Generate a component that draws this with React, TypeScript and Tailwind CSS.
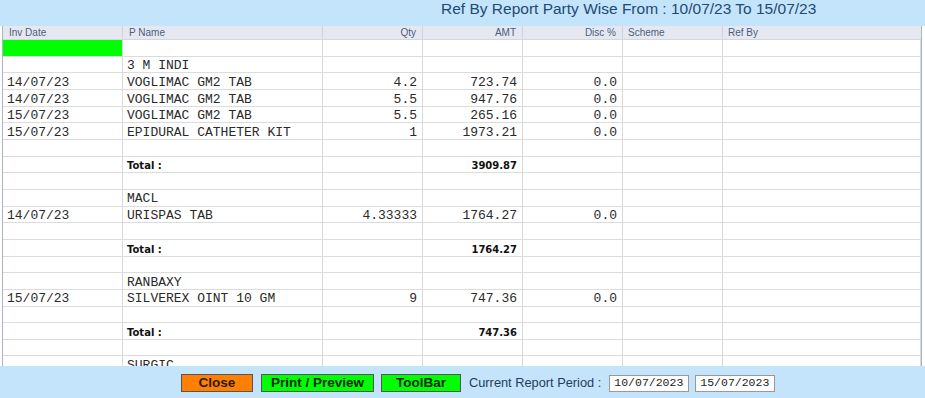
import React from 'react';

type Row =
  | { kind: 'blank' }
  | { kind: 'green' }
  | { kind: 'party'; name: string }
  | { kind: 'item'; date: string; name: string; qty: string; amt: string; disc: string }
  | { kind: 'total'; amt: string };

const rows: Row[] = [
  { kind: 'green' },
  { kind: 'party', name: '3 M INDI' },
  { kind: 'item', date: '14/07/23', name: 'VOGLIMAC GM2 TAB', qty: '4.2', amt: '723.74', disc: '0.0' },
  { kind: 'item', date: '14/07/23', name: 'VOGLIMAC GM2 TAB', qty: '5.5', amt: '947.76', disc: '0.0' },
  { kind: 'item', date: '15/07/23', name: 'VOGLIMAC GM2 TAB', qty: '5.5', amt: '265.16', disc: '0.0' },
  { kind: 'item', date: '15/07/23', name: 'EPIDURAL CATHETER KIT', qty: '1', amt: '1973.21', disc: '0.0' },
  { kind: 'blank' },
  { kind: 'total', amt: '3909.87' },
  { kind: 'blank' },
  { kind: 'party', name: 'MACL' },
  { kind: 'item', date: '14/07/23', name: 'URISPAS TAB', qty: '4.33333', amt: '1764.27', disc: '0.0' },
  { kind: 'blank' },
  { kind: 'total', amt: '1764.27' },
  { kind: 'blank' },
  { kind: 'party', name: 'RANBAXY' },
  { kind: 'item', date: '15/07/23', name: 'SILVEREX OINT 10 GM', qty: '9', amt: '747.36', disc: '0.0' },
  { kind: 'blank' },
  { kind: 'total', amt: '747.36' },
  { kind: 'blank' },
  { kind: 'party', name: 'SURGIC' },
];

// Courier-like grid text
const mono = "font-['Liberation_Mono','Courier_New',monospace] text-[13px] text-[#2a2a2a]";
const bold = "font-['DejaVu_Sans',Verdana,sans-serif] font-bold text-[10px] text-[#111]";
const cell = 'border-r border-[#d9d9d9] px-[4px] pt-[3px] flex items-center overflow-hidden whitespace-nowrap';

function GridRow({ r }: { r: Row }) {
  const date = r.kind === 'item' ? r.date : '';
  const qty = r.kind === 'item' ? r.qty : '';
  const disc = r.kind === 'item' ? r.disc : '';
  return (
    <div className="flex h-[16.67px] border-b border-[#dcdcdc] shrink-0">
      <div className={`${cell} w-[120px] ${r.kind === 'green' ? 'bg-[#00ff00]' : ''} ${mono}`}>{date}</div>
      <div className={`${cell} w-[200px]`}>
        {r.kind === 'total' ? (
          <span className={bold}>Total :</span>
        ) : (
          <span className={mono}>{r.kind === 'item' || r.kind === 'party' ? r.name : ''}</span>
        )}
      </div>
      <div className={`${cell} w-[100px] justify-end pr-[5px] ${mono}`}>{qty}</div>
      <div className={`${cell} w-[100px] justify-end pr-[5px]`}>
        {r.kind === 'total' ? (
          <span className={bold}>{r.amt}</span>
        ) : (
          <span className={mono}>{r.kind === 'item' ? r.amt : ''}</span>
        )}
      </div>
      <div className={`${cell} w-[100px] justify-end pr-[5px] ${mono}`}>{disc}</div>
      <div className={`${cell} w-[100px]`}></div>
      <div className={`${cell} flex-1`}></div>
    </div>
  );
}

export default function App() {
  const head = "font-['Liberation_Sans',Arial,sans-serif] text-[10px] text-[#4b5e7a]";
  const input =
    "w-[80px] h-[17px] bg-white border border-[#999] flex items-center pl-[4px] font-['Liberation_Mono','Courier_New',monospace] text-[11.5px] text-[#222]";
  return (
    <div className="w-[925px] h-[398px] flex flex-col bg-white overflow-hidden font-['Liberation_Sans',Arial,sans-serif]">
      {/* Title bar */}
      <div className="h-[26px] bg-[#c4e4fb] flex items-start pl-[441px] shrink-0">
        <span className="text-[15.5px] leading-[18px] text-[#1f4a73]">Ref By Report Party Wise From : 10/07/23 To 15/07/23</span>
      </div>

      {/* Grid */}
      <div className="flex-1 flex flex-col ml-[2px] mr-[3px] border-l border-r border-[#a9b4c2] overflow-hidden">
        <div className="flex h-[14px] bg-[#e6e8f1] border-b border-[#d3d6de] shrink-0">
          <div className={`w-[120px] border-r border-[#d0d3da] pl-[6px] flex items-center ${head}`}>Inv Date</div>
          <div className={`w-[200px] border-r border-[#d0d3da] pl-[6px] flex items-center ${head}`}>P Name</div>
          <div className={`w-[100px] border-r border-[#d0d3da] pr-[6px] flex items-center justify-end ${head}`}>Qty</div>
          <div className={`w-[100px] border-r border-[#d0d3da] pr-[6px] flex items-center justify-end ${head}`}>AMT</div>
          <div className={`w-[100px] border-r border-[#d0d3da] pr-[6px] flex items-center justify-end ${head}`}>Disc %</div>
          <div className={`w-[100px] border-r border-[#d0d3da] pl-[5px] flex items-center ${head}`}>Scheme</div>
          <div className={`flex-1 pl-[5px] flex items-center ${head}`}>Ref By</div>
        </div>
        {rows.map((r, i) => (
          <GridRow key={i} r={r} />
        ))}
      </div>

      {/* Bottom bar */}
      <div className="h-[32px] bg-[#c4e4fb] flex items-center pl-[181px] pt-[2px] shrink-0">
        <button className="w-[72px] h-[18px] bg-[#ff8000] border border-[#555] text-[13.5px] font-bold text-[#2a1a0a] flex items-center justify-center">
          Close
        </button>
        <button className="w-[113px] h-[18px] ml-[8px] bg-[#00ff00] border border-[#555] text-[13.5px] font-bold text-[#0a2a0a] flex items-center justify-center">
          Print / Preview
        </button>
        <button className="w-[80px] h-[18px] ml-[7px] bg-[#00ff00] border border-[#555] text-[13.5px] font-bold text-[#0a2a0a] flex items-center justify-center">
          ToolBar
        </button>
        <span className="ml-[8px] text-[12.8px] text-[#1f3d5c]">Current Report Period :</span>
        <div className={`${input} ml-[8px]`}>10/07/2023</div>
        <div className={`${input} ml-[6px]`}>15/07/2023</div>
      </div>
    </div>
  );
}
